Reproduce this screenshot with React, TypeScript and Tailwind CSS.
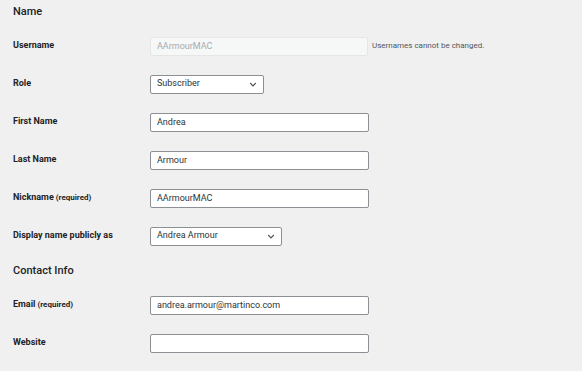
import React from "react";

type Field = {
  label: string;
  note?: string;
  kind: "text" | "select" | "disabled";
  value: string;
  width: string;
  help?: string;
};

const nameFields: Field[] = [
  { label: "Username", kind: "disabled", value: "AArmourMAC", width: "w-[218px]", help: "Usernames cannot be changed." },
  { label: "Role", kind: "select", value: "Subscriber", width: "w-[114px]" },
  { label: "First Name", kind: "text", value: "Andrea", width: "w-[219px]" },
  { label: "Last Name", kind: "text", value: "Armour", width: "w-[219px]" },
  { label: "Nickname", note: "(required)", kind: "text", value: "AArmourMAC", width: "w-[219px]" },
  { label: "Display name publicly as", kind: "select", value: "Andrea Armour", width: "w-[132px]" },
];

const contactFields: Field[] = [
  { label: "Email", note: "(required)", kind: "text", value: "andrea.armour@martinco.com", width: "w-[219px]" },
  { label: "Website", kind: "text", value: "", width: "w-[219px]" },
];

function Chevron() {
  return (
    <svg width="8" height="5" viewBox="0 0 8 5" className="mr-[6px]">
      <path d="M1.2 1 L4 3.8 L6.8 1" fill="none" stroke="#50575e" strokeWidth="1.2" />
    </svg>
  );
}

function Row({ field }: { field: Field }) {
  return (
    <div className="flex items-center h-[38px]">
      <div className="w-[137px] shrink-0 text-[9px] font-bold text-[#1d2327]">
        {field.label}
        {field.note && <span className="text-[8px] ml-[2px]">{field.note}</span>}
      </div>
      {field.kind === "select" ? (
        <div
          className={`${field.width} h-[19px] flex items-center justify-between bg-white border border-[#8c8f94] rounded-[2px] pl-[6px] text-[9px] text-[#2c3338]`}
        >
          <span>{field.value}</span>
          <Chevron />
        </div>
      ) : (
        <input
          readOnly
          value={field.value}
          className={`${field.width} h-[19px] px-[6px] text-[9px] rounded-[2px] border outline-none ${
            field.kind === "disabled"
              ? "bg-[#f6f7f7] border-[#e6e6e6] text-[#a7aaad]"
              : "bg-white border-[#8c8f94] text-[#2c3338]"
          }`}
        />
      )}
      {field.help && <span className="ml-[4px] text-[8px] text-[#50575e]">{field.help}</span>}
    </div>
  );
}

export default function App() {
  return (
    <div className="w-[582px] h-[371px] bg-[#f0f0f1] pl-[13px] pt-[5px] overflow-hidden" style={{ fontFamily: "Roboto, 'Liberation Sans', sans-serif" }}>
      <h2 className="text-[11px] leading-[14px] font-medium text-[#1d2327]">Name</h2>
      <div className="mt-[8px]">
        {nameFields.map((f) => (
          <Row key={f.label} field={f} />
        ))}
      </div>
      <h2 className="mt-[9px] text-[11px] leading-[14px] font-medium text-[#1d2327]">Contact Info</h2>
      <div className="mt-[8px]">
        {contactFields.map((f) => (
          <Row key={f.label} field={f} />
        ))}
      </div>
    </div>
  );
}
